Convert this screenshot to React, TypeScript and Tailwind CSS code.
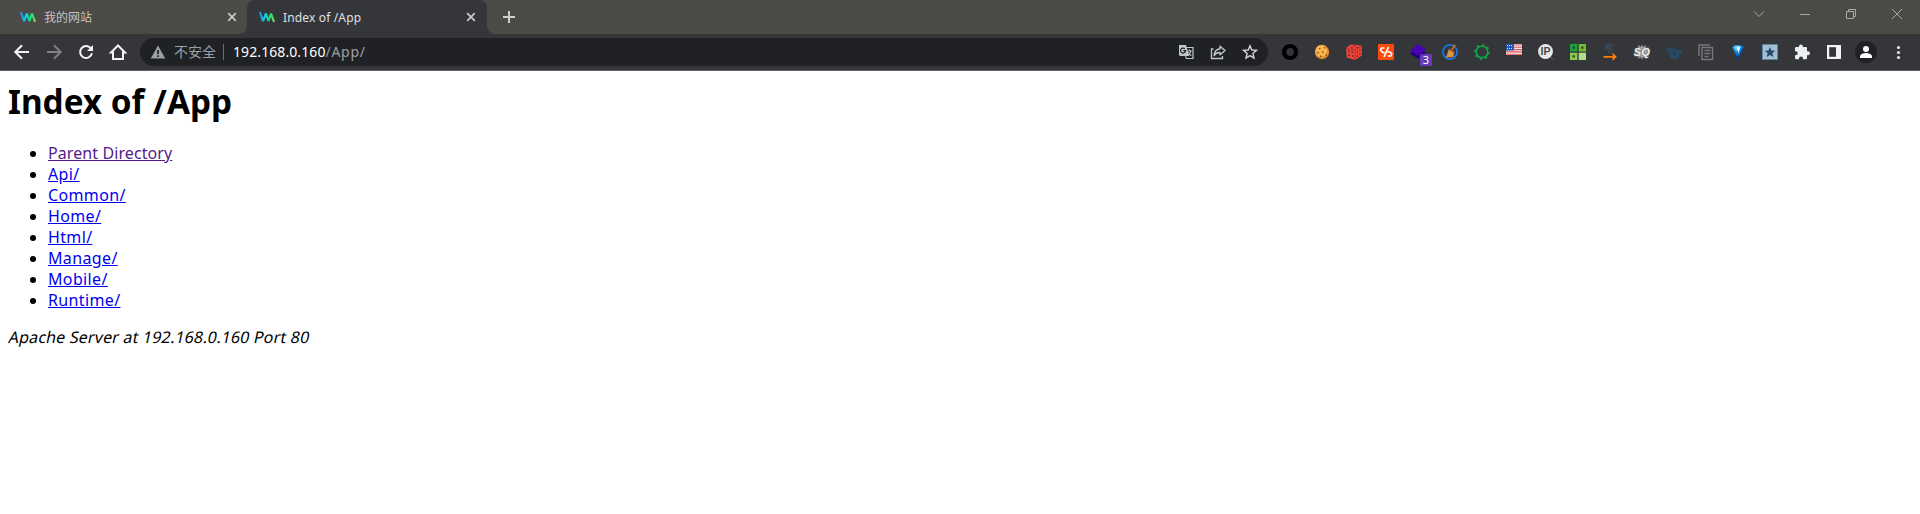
import React from 'react';

function Logo() {
  return (
    <svg className="h-4 w-4 shrink-0" viewBox="0 0 16 16" fill="none">
      <defs>
        <linearGradient id="logo" x1="0" x2="16" y1="0" y2="0" gradientUnits="userSpaceOnUse">
          <stop offset="0" stopColor="#1487f5" />
          <stop offset=".35" stopColor="#12cfe8" />
          <stop offset=".65" stopColor="#12e070" />
          <stop offset="1" stopColor="#8ed060" />
        </linearGradient>
      </defs>
      <path d="M.8 3 4 12 7 4.500 9.500 12 12 4.500 15 13" stroke="url(#logo)" strokeWidth="2.200" strokeLinejoin="bevel" />
    </svg>
  );
}

function Close() {
  return (
    <svg className="h-4 w-4 shrink-0" viewBox="0 0 16 16" stroke="#c8c9cb" strokeWidth="1.700">
      <path d="m4.200 4.200 7.600 7.600m0-7.600-7.600 7.600" />
    </svg>
  );
}

function Cell({ children }: { children: React.ReactNode }) {
  return (
    <div className="flex h-7 w-8 shrink-0 items-center justify-center">
      <svg className="h-4 w-4 overflow-visible" viewBox="0 0 16 16" fill="none">
        {children}
      </svg>
    </div>
  );
}

function WindowButton({ d }: { d: string }) {
  return (
    <div className="flex h-4 w-[46px] items-center justify-center">
      <svg className="h-4 w-4" viewBox="0 0 16 16" fill="none" stroke="#a8a7a4">
        <path d={d} />
      </svg>
    </div>
  );
}

function TabStrip() {
  return (
    <div className="flex h-[34px] bg-[#4c4a46]">
      <div className="flex h-[34px] w-[247px] items-center pl-5 pr-[7px]">
        <Logo />
        <span className="ml-2 flex-1 pt-px text-[12px] leading-4 text-[#c4c3c1]">我的网站</span>
        <Close />
      </div>
      <div className="relative flex h-[34px] w-[240px] items-center rounded-t-lg bg-[#35363a] pl-3 pr-2">
        <svg className="absolute -left-2 bottom-0 h-2 w-2" viewBox="0 0 8 8" fill="#35363a">
          <path d="M8 0v8H0a8 8 0 0 0 8-8Z" />
        </svg>
        <svg className="absolute -right-2 bottom-0 h-2 w-2" viewBox="0 0 8 8" fill="#35363a">
          <path d="M0 0v8h8a8 8 0 0 1-8-8Z" />
        </svg>
        <Logo />
        <span className="ml-2 flex-1 pt-px text-[12px] leading-4 tracking-[0.15px] text-[#dfe0e2]">Index of /App</span>
        <Close />
      </div>
      <svg className="ml-3.5 mt-[9px] h-4 w-4" viewBox="0 0 16 16" stroke="#cfcfce" strokeWidth="2">
        <path d="M2 8h12M8 2v12" />
      </svg>
      <div className="ml-auto flex pt-[6px]">
        <WindowButton d="m3 5.500 5 5 5-5" />
        <WindowButton d="M3 8.500h10" />
        <WindowButton d="M3.500 5.500h7v7h-7zM5.500 5.500v-2h7v7h-2" />
        <WindowButton d="m3 3 10 10m0-10L3 13" />
      </div>
    </div>
  );
}

function Omnibox() {
  return (
    <div className="ml-1.5 flex h-7 w-[1128px] items-center rounded-full bg-[#202124] pl-2.5 pr-0.5">
      <svg className="h-4 w-4" viewBox="0 0 16 16">
        <path d="M8 1.500 15.300 14.500H.7Z" fill="#9aa0a6" />
        <path d="M7.200 6h1.700v4H7.200zM7.200 11.300h1.700V13H7.200z" fill="#202124" />
      </svg>
      <span className="ml-2 w-[42px] whitespace-nowrap text-[14px] leading-5 text-[#9aa0a6]">不安全</span>
      <span className="ml-[7px] h-4 w-px bg-[#6b6e72]" />
      <span className="ml-[9px] flex-1 text-[14px] leading-5 tracking-[0.7px] text-[#9aa0a6]">
        <span className="tracking-[0.09px] text-white">192.168.0.160</span>/App/
      </span>
      <Cell>
        <path d="M1 1h7l3.300 11H2.500A1.500 1.500 0 0 1 1 10.500Z" fill="#c4c7ca" />
        <path d="M8.500 3.500h6.500v11H8.500l-1-2.300" stroke="#c4c7ca" strokeWidth="1.200" />
        <path d="M5.300 6.700h2.300a2.500 2.500 0 1 1-.8-2" stroke="#202124" strokeWidth="1.200" />
        <path d="M9.500 7h4.300M11.500 5.500V7m1.300 0c-.2 1.500-1 2.700-2 3.500M10.500 8.500l2.800 3.500" stroke="#c4c7ca" strokeWidth="1.100" />
      </Cell>
      <Cell>
        <path d="M3.500 5H1.500v9.500h11V12" stroke="#c4c7ca" strokeWidth="1.300" />
        <path d="M10 2.200 15 6.500l-5 4.300V8.500C7.500 8.300 5.500 9.500 4 11.500 4.400 7.800 6.500 5.300 10 4.800Z" stroke="#c4c7ca" strokeWidth="1.400" strokeLinejoin="round" />
      </Cell>
      <Cell>
        <path d="m8 1.700 1.800 4.300 4.700.4-3.600 3.100 1.100 4.600L8 11.600l-4 2.500 1.100-4.600L1.500 6.400 6.200 6Z" stroke="#d2d4d7" strokeWidth="1.400" />
      </Cell>
    </div>
  );
}

function Extensions() {
  return (
    <div className="ml-1.5 flex">
      <Cell><circle cx="8" cy="8" r="6" stroke="#000" strokeWidth="4.200" /></Cell>
      <Cell>
        <circle cx="8" cy="8" r="7.200" fill="#df8d2f" />
        <circle cx="7.300" cy="7" r="5.900" fill="#f8b54e" />
        <path d="M5 4h1.500v1.200H5zM10 3h1.200v1.500H10zM3.200 8h1.500v1.500H3.200zM8 7.500h1.800v1.300H8zM6 11.500h1.500V13H6zM11.500 10.500H13V12h-1.500z" fill="#8d4b16" />
      </Cell>
      <Cell>
        <path d="M5 .500 15.500 1.500 16 11.500 9 16 .8 13.500 0 4Z" fill="#f44336" />
        <path d="m.3 4.500 9 1.500L15.500 2M9.300 6 9 16" stroke="#8e3534" strokeWidth=".8" />
        <path d="M7.500 1.500h1.800v1H7.500zM5 3.200h1.800v1H5zM10.500 3h1.800v1h-1.800zM2 6.500h1.500V8H2zM5.500 7.200H7v1.500H5.500zM2.500 10.500H4V12H2.500zM6 11.300h1.500v1.500H6zM11 7.500h1.200V9H11zM13.300 5.500h1.200V7h-1.200zM11 11.500h1.200V13H11zM13.300 9.500h1.200V11h-1.200z" fill="#4d292c" />
      </Cell>
      <Cell>
        <rect width="16" height="16" rx="1" fill="#ff4a0d" />
        <path d="M6.500 4H3.500L2.500 6 4.500 8.500h2.300M9.500 8h2.500l1.800 2-1 2H9.800M10.500 3.200 6 12.800" stroke="#fff" strokeWidth="1.600" />
      </Cell>
      <Cell>
        <path d="m0 9.500 7.500-5 8.500 4-7.500 6.500Z" fill="#22007c" />
        <path d="m0 7 8-7 8 5.500-7.500 6.300Z" fill="#4a00b4" />
        <rect x="10" y="10" width="12" height="12" rx="1.500" fill="#673ab7" />
        <text x="16" y="20" textAnchor="middle" fontSize="11" fill="#fff">3</text>
      </Cell>
      <Cell>
        <circle cx="8" cy="8" r="7.100" stroke="#1976dc" strokeWidth="1.800" />
        <path d="m13 .8-3.300 5.500" stroke="#b66b2e" strokeWidth="2" />
        <path d="m7 5 5.200 3-.8 5-8.200.5c2.500-2 2.200-5.500 3.800-8.500Z" fill="#dc9447" />
        <path d="m7.200 4.500 5.300 3-.4 1.600-5.700-3Z" fill="#a55c29" />
      </Cell>
      <Cell>
        <circle cx="8" cy="8" r="5.800" stroke="#0da84b" strokeWidth="1.600" />
        <circle cx="8" cy="8" r="7.100" stroke="#0da84b" strokeWidth="1.800" strokeDasharray="2 3.576" />
      </Cell>
      <Cell>
        <path d="M0 0h16v11H0z" fill="#f4eeee" />
        <path d="M0 1h16M0 3.300h16M0 5.600h16M0 7.900h16M0 10.200h16" stroke="#e05451" strokeWidth="1.100" />
        <path d="M0 0h8v6.500H0z" fill="#2459b8" />
        <path d="M1 1.500h6M1 4.500h6" stroke="#d7e2f7" strokeDasharray="1 1" />
      </Cell>
      <Cell>
        <circle cx="7.500" cy="7.500" r="7.400" fill="#e7e9ea" />
        <path d="m12.500 13 2.500 2.500" stroke="#777" />
        <text x="7.500" y="11.300" textAnchor="middle" fontSize="10.500" fontWeight="bold" fill="#4b4b4b" className="font-['Liberation_Sans',sans-serif]">IP</text>
      </Cell>
      <Cell>
        <path d="M1.300 1.300h4.800v4.800H1.300z" stroke="#13a43c" strokeWidth="2.600" />
        <path d="M10 1.300h4.700v4.800H10z" stroke="#70bd2f" strokeWidth="2.600" />
        <path d="M1.300 10h4.800v4.700H1.300z" stroke="#8bc84b" strokeWidth="2.600" />
        <path d="M8.700 8.700H16V16H8.700z" fill="#aee083" />
      </Cell>
      <Cell>
        <path d="M7 0v5.500H5.500A2.700 2.700 0 0 1 5.500 0Z" fill="#34495a" />
        <path d="M5.500.6H12M7.200 0v9.500M9.800 0v9.500" stroke="#34495a" strokeWidth="1.300" />
        <path d="M1.500 12.800H13M10.500 9.800l3 3-3 3" stroke="#ff7d0a" strokeWidth="1.800" />
      </Cell>
      <Cell>
        <path d="m8 0 1 3 3-2-.3 3L15 3.500 13.500 7l2 1-2 1.500 1.500 3-3.500-.5.5 3-3-2-1 3-1-3-3 2 .5-3L1 12.500l2-3L0 8l3-1-2-3 3.300.3L4 1l3 2Z" fill="#a2a2a2" />
        <text x="7.800" y="12" textAnchor="middle" fontSize="11" fontWeight="bold" fontStyle="italic" fill="#f0f0f0" stroke="#707070" strokeWidth="1" paintOrder="stroke" className="font-['Liberation_Sans',sans-serif]">SQ</text>
      </Cell>
      <Cell>
        <path d="M0 3.200c3 .2 5 .8 6.500 1.800C8 4.300 10 4.300 11.500 5.500l4 .2.300 3.600-1.800.3c0 3-2 5.700-5.500 5.700-3.500 0-6-2.500-5.500-6C2 8 .5 6 0 3.200Z" fill="#244b63" />
        <circle cx="8.500" cy="9.700" r="1.600" fill="#35363a" />
      </Cell>
      <Cell>
        <path d="M1 12V1h11M4 3.500h10.500v12H4z" stroke="#77787a" strokeWidth="1.400" />
        <path d="M6.500 6.500h6M6.500 9.500h6M6.500 12.500h4" stroke="#77787a" strokeWidth="1.400" />
      </Cell>
      <Cell>
        <path d="M2 3.500 4.500 1h7L14 3.500 9.500 12 9 15H7l-.5-3Z" fill="#0877d5" />
        <path d="m3 3.500 2-1.800h4l-2.500 6Z" fill="#57c6ff" />
        <path d="M6.500 2.500h4.300L8.300 9.500Z" fill="#eafaff" />
        <path d="M12.500 4.500 9 12l-2-1.500V15h2l.5-3L14 3.500Z" fill="#083a79" />
      </Cell>
      <Cell>
        <path d="M.5.500h15v15H.5z" fill="#9fc0d5" stroke="#5d88a5" />
        <path d="m8 3 1.500 3.500 3.700.3-2.800 2.500.9 3.700L8 11l-3.300 2 .9-3.700-2.800-2.500 3.700-.3Z" fill="#264e68" />
      </Cell>
      <Cell>
        <path d="M14 7.300h-1V4.400A1.300 1.300 0 0 0 11.700 3H8.800V2.300a1.900 1.900 0 0 0-3.800 0V3H2.300A1.300 1.300 0 0 0 1 4.300v2.900h.7a2 2 0 0 1 0 4H1V14a1.300 1.300 0 0 0 1.300 1.300H5v-.8a2 2 0 0 1 4 0v.8h2.700A1.300 1.300 0 0 0 13 14v-2.800h1a1.900 1.900 0 0 0 0-3.900Z" fill="#eceff1" />
      </Cell>
      <Cell>
        <path d="M1 1h14v14H1z" fill="#f1f3f4" />
        <path d="M3.200 3.200H10v9.600H3.200z" fill="#35363a" />
      </Cell>
      <Cell>
        <circle cx="8" cy="8" r="11" fill="#202124" />
        <circle cx="8" cy="5" r="3" fill="#fff" />
        <path d="M2 14v-1.500C2 10 6 9 8 9s6 1 6 3.500V14Z" fill="#fff" />
      </Cell>
      <Cell>
        <circle cx="8.500" cy="3.500" r="1.600" fill="#e8eaed" />
        <circle cx="8.500" cy="8.500" r="1.600" fill="#e8eaed" />
        <circle cx="8.500" cy="13.500" r="1.600" fill="#e8eaed" />
      </Cell>
    </div>
  );
}

function Toolbar() {
  return (
    <div className="flex h-[37px] items-center border-b border-[#626066] bg-[#35363a] pb-1 pl-1.5 pt-1">
      <Cell><path d="M15 8H2M8 1.300 1.300 8 8 14.700" stroke="#f1f3f4" strokeWidth="2" /></Cell>
      <Cell><path d="M1 8h13M8 1.300 14.700 8 8 14.700" stroke="#808185" strokeWidth="2" /></Cell>
      <Cell>
        <path d="M13.200 4.800A6 6 0 1 0 14 9.300" stroke="#f1f3f4" strokeWidth="2" />
        <path d="M15 1v6H9Z" fill="#f1f3f4" />
      </Cell>
      <Cell><path d="M3 15V8.500H1L8 1.500l7 7h-2V15Z" stroke="#f1f3f4" strokeWidth="2" /></Cell>
      <Omnibox />
      <Extensions />
    </div>
  );
}

const entries = ['Parent Directory', 'Api/', 'Common/', 'Home/', 'Html/', 'Manage/', 'Mobile/', 'Runtime/'];

export default function App() {
  return (
    <div className="h-[514px] w-[1920px] overflow-hidden bg-white font-['Noto_Sans','Noto_Sans_CJK_SC',sans-serif] text-black">
      <TabStrip />
      <Toolbar />
      <main className="px-2">
        <h1 className="pt-[9px] text-[33.3px] font-bold leading-[43px]">Index of /App</h1>
        <ul className="mt-5 list-disc pl-10 text-[16px] leading-[21px]">
          {entries.map((entry, i) => (
            <li key={entry}>
              <a className={i === 0 ? 'tracking-[0.09px] text-[#551a8b] underline' : 'tracking-[0.36px] text-[#0000ee] underline'}>{entry}</a>
            </li>
          ))}
        </ul>
        <address className="mt-4 pl-px text-[16px] not-italic leading-[21px] tracking-[0.18px]">
          <span className="inline-block -skew-x-12">Apache Server at 192.168.0.160 Port 80</span>
        </address>
      </main>
    </div>
  );
}
